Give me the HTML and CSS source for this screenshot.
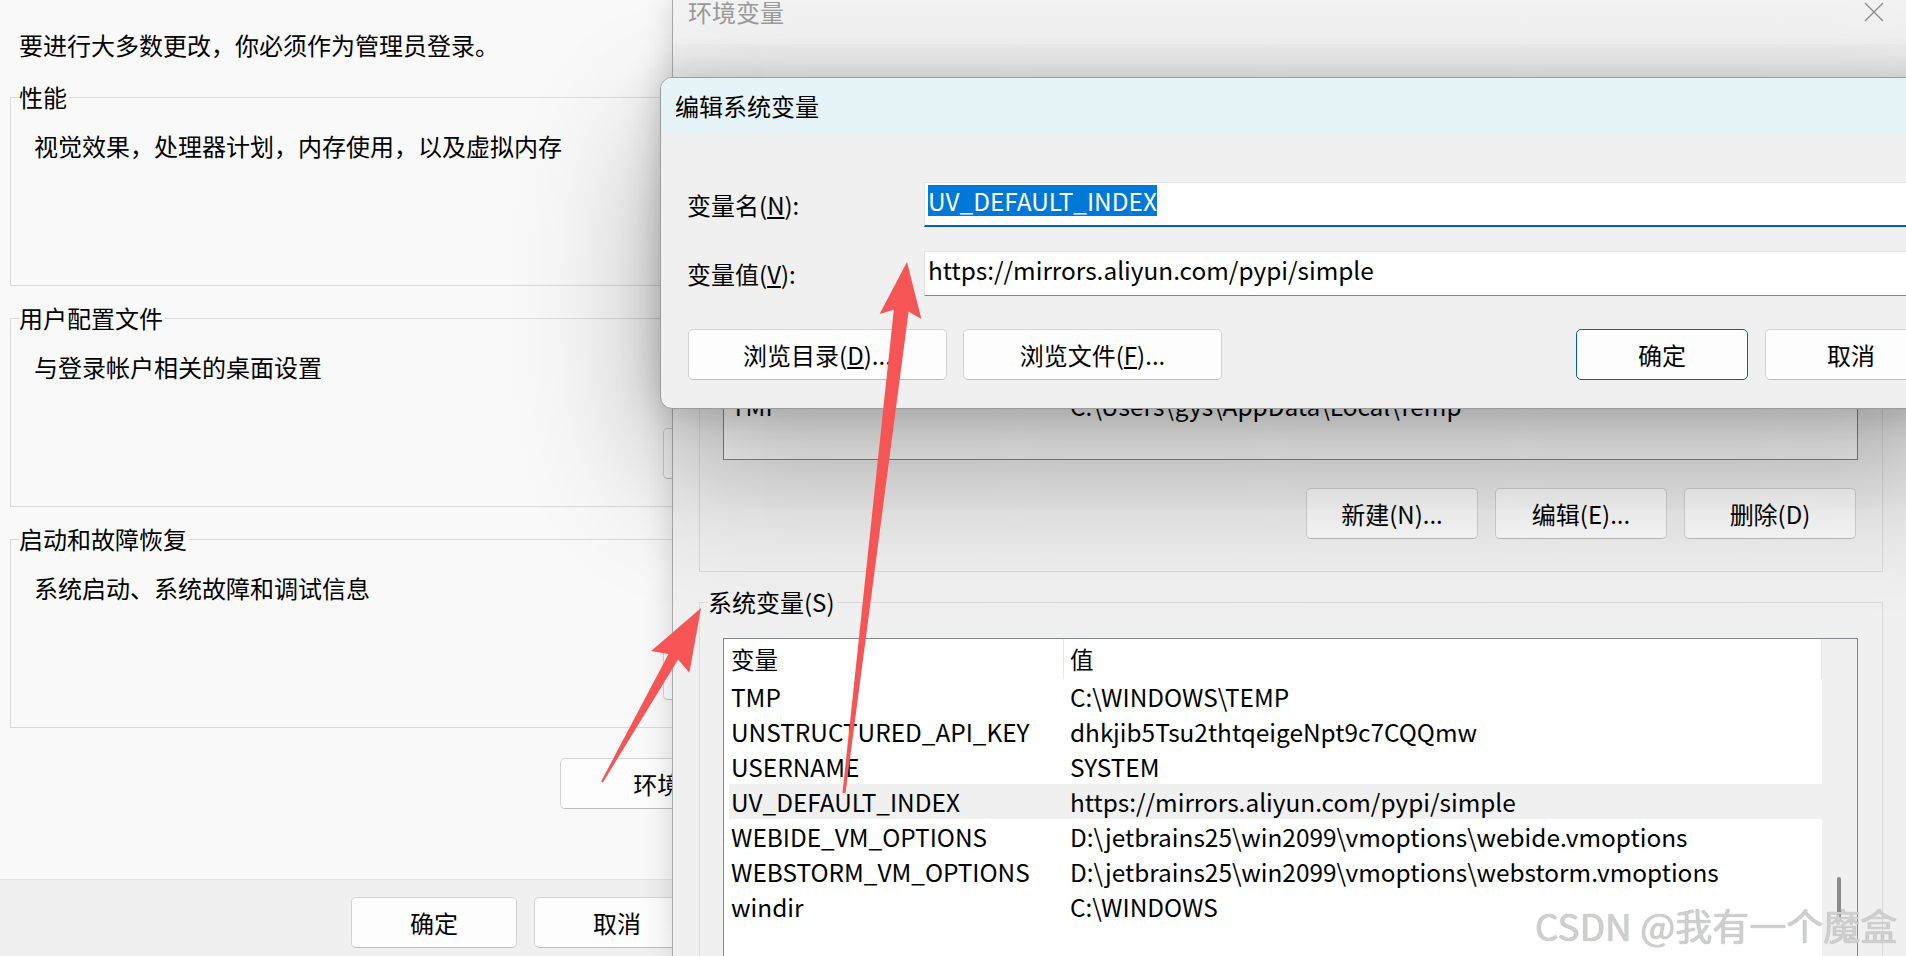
FILE: index.html
```html
<!DOCTYPE html>
<html lang="zh-CN">
<head>
    <meta charset="UTF-8">
    <meta name="viewport" content="width=device-width, initial-scale=1.0">
    <title>环境变量</title>
    <link rel="stylesheet" href="styles.css">
</head>
<body>
<div class="desktop">

    <!-- 系统属性 / 高级 -->
    <div class="window sysprops">
        <div class="sp-body">
            <p class="notice">要进行大多数更改，你必须作为管理员登录。</p>

            <div class="group sp-group">
                <div class="group-title">性能</div>
                <div class="group-desc">视觉效果，处理器计划，内存使用，以及虚拟内存</div>
                <button class="btn btn-settings">设置(S)...</button>
            </div>

            <div class="group sp-group">
                <div class="group-title">用户配置文件</div>
                <div class="group-desc">与登录帐户相关的桌面设置</div>
                <button class="btn btn-settings">设置(E)...</button>
            </div>

            <div class="group sp-group">
                <div class="group-title">启动和故障恢复</div>
                <div class="group-desc">系统启动、系统故障和调试信息</div>
                <button class="btn btn-settings">设置(T)...</button>
            </div>

            <div class="sp-actions">
                <button class="btn btn-env">环境变量(N)...</button>
            </div>
        </div>
        <div class="sp-footer">
            <button class="btn btn-std">确定</button>
            <button class="btn btn-std">取消</button>
        </div>
    </div>

    <!-- 环境变量 -->
    <div class="window envvars">
        <div class="env-title">
            <span>环境变量</span>
            <svg class="close-icon" width="20" height="20" viewBox="0 0 20 20">
                <path d="M1 1 L19 19 M19 1 L1 19" stroke="#8f8f8f" stroke-width="1.4" fill="none"/>
            </svg>
        </div>
        <div class="env-body">
            <div class="group user-group">
                <div class="group-title">gys 的用户变量(U)</div>
                <div class="varlist user-list">
                    <div class="list-main">
                        <div class="list-head"><span>变量</span><span>值</span></div>
                        <div class="list-row"><span>ChocolateyLastPathUpdate</span><span>133870452011938011</span></div>
                        <div class="list-row"><span>OneDrive</span><span>C:\Users\gys\OneDrive</span></div>
                        <div class="list-row"><span>OneDriveConsumer</span><span>C:\Users\gys\OneDrive</span></div>
                        <div class="list-row"><span>Path</span><span>C:\Users\gys\.local\bin;C:\Users\gys\AppData\Local\Microsoft\WindowsApps;</span></div>
                        <div class="list-row"><span>PyCharm</span><span>D:\PyCharm\bin;</span></div>
                        <div class="list-row"><span>TEMP</span><span>C:\Users\gys\AppData\Local\Temp</span></div>
                        <div class="list-row"><span>TMP</span><span>C:\Users\gys\AppData\Local\Temp</span></div>
                    </div>
                </div>
                <div class="btn-row">
                    <button class="btn btn-std">新建(N)...</button>
                    <button class="btn btn-std">编辑(E)...</button>
                    <button class="btn btn-std">删除(D)</button>
                </div>
            </div>

            <div class="group sys-group">
                <div class="group-title">系统变量(S)</div>
                <div class="varlist sys-list">
                    <div class="list-main">
                        <div class="list-head"><span>变量</span><span>值</span></div>
                        <div class="list-row"><span>TMP</span><span>C:\WINDOWS\TEMP</span></div>
                        <div class="list-row"><span>UNSTRUCTURED_API_KEY</span><span>dhkjib5Tsu2thtqeigeNpt9c7CQQmw</span></div>
                        <div class="list-row"><span>USERNAME</span><span>SYSTEM</span></div>
                        <div class="list-row selected"><span>UV_DEFAULT_INDEX</span><span>https://mirrors.aliyun.com/pypi/simple</span></div>
                        <div class="list-row"><span>WEBIDE_VM_OPTIONS</span><span>D:\jetbrains25\win2099\vmoptions\webide.vmoptions</span></div>
                        <div class="list-row"><span>WEBSTORM_VM_OPTIONS</span><span>D:\jetbrains25\win2099\vmoptions\webstorm.vmoptions</span></div>
                        <div class="list-row"><span>windir</span><span>C:\WINDOWS</span></div>
                    </div>
                    <div class="scroll-track">
                        <div class="scroll-thumb"></div>
                    </div>
                </div>
            </div>
        </div>
    </div>

    <!-- 编辑系统变量 -->
    <div class="window editdlg">
        <div class="dlg-title">编辑系统变量</div>
        <div class="dlg-body">
            <div class="field-row">
                <label class="field-label">变量名(<u>N</u>):</label>
                <div class="input focused"><span class="sel">UV_DEFAULT_INDEX</span></div>
            </div>
            <div class="field-row">
                <label class="field-label">变量值(<u>V</u>):</label>
                <div class="input">https://mirrors.aliyun.com/pypi/simple</div>
            </div>
            <div class="dlg-buttons">
                <button class="btn btn-browse">浏览目录(<u>D</u>)...</button>
                <button class="btn btn-browse">浏览文件(<u>F</u>)...</button>
                <div class="dlg-confirm">
                    <button class="btn btn-std btn-default">确定</button>
                    <button class="btn btn-std">取消</button>
                </div>
            </div>
        </div>
    </div>

    <!-- 标注箭头 -->
    <svg class="annotations" width="1906" height="956" viewBox="0 0 1906 956">
        <polygon fill="#f65555" points="601.1,781.5 668.5,653.9 651.2,651.0 701,608 689.4,672.8 678.1,659.4 602.9,782.5"/>
        <polygon fill="#f65555" points="842.5,792.8 893.8,309.7 879.6,314.1 907,262 921.4,319.1 908.6,311.5 845.5,793.2"/>
    </svg>

    <div class="watermark">CSDN @我有一个魔盒</div>
</div>
</body>
</html>
```

FILE: styles.css
```css
* {
    box-sizing: border-box;
}

html, body {
    margin: 0;
    height: 100%;
}

body {
    font-family: "Noto Sans CJK SC", "Noto Sans", sans-serif;
    font-size: 24px;
    color: #000;
    background-color: #f9f9f9;
    overflow: hidden;
}

.desktop {
    position: relative;
    width: 1906px;
    height: 956px;
    overflow: hidden;
}

.window {
    position: absolute;
}

button {
    font: inherit;
    color: inherit;
}

.btn {
    display: flex;
    align-items: center;
    justify-content: center;
    height: 51px;
    padding: 0;
    background-color: #fdfdfd;
    border: 1px solid #d3d3d3;
    border-bottom-color: #bdbdbd;
    border-radius: 5px;
    white-space: nowrap;
}

.btn-std {
    width: 172px;
}

/* group boxes */
.group {
    border: 1px solid #dadada;
}

.group-title {
    width: fit-content;
    margin: -16px 0 0 8px;
    padding-right: 2px;
    line-height: 30px;
    white-space: nowrap;
}

/* system properties */
.sysprops {
    left: 0;
    top: 0;
    width: 700px;
    height: 956px;
    display: flex;
    flex-direction: column;
    background-color: #f9f9f9;
}

.sp-body {
    flex: 1;
    padding-top: 30px;
}

.notice {
    margin: 0 0 0 19px;
    line-height: 30px;
}

.sp-group {
    height: 189px;
    margin: 32px 0 0 10px;
}

.notice + .sp-group {
    margin-top: 37px;
}

.sp-group .group-title {
    background-color: #f9f9f9;
}

.group-desc {
    margin: 19px 0 0 23px;
    line-height: 30px;
}

.btn-settings {
    width: 172px;
    margin: 46px 0 0 652px;
}

.sp-actions {
    margin-top: 30px;
}

.btn-env {
    width: 296px;
    margin-left: 560px;
}

.sp-footer {
    height: 77px;
    display: flex;
    gap: 17px;
    padding: 17px 0 0 351px;
    background-color: #f0f0f0;
    border-top: 1px solid #e3e3e3;
}

/* environment variables */
.envvars {
    left: 672px;
    top: 0;
    width: 1234px;
    height: 956px;
    background-color: #f0f0f0;
    border-left: 1px solid #a9a9a9;
    box-shadow: 0 0 30px rgba(0, 0, 0, 0.16);
}

.env-title {
    height: 44px;
    display: flex;
    justify-content: space-between;
    padding: 0 22px 0 15px;
    line-height: 24px;
    color: #9b9b9b;
    background-color: #f3f3f3;
}

.close-icon {
    margin-top: 2px;
}

.env-body {
    padding: 0 23px 0 26px;
}

.envvars .group-title {
    background-color: #f0f0f0;
}

.user-group {
    height: 467px;
    margin-top: 61px;
}

.sys-group {
    height: 400px;
    margin-top: 30px;
}

.varlist {
    display: flex;
    margin: 21px 24px 0 23px;
    background-color: #fff;
    border: 1px solid #828790;
    overflow: hidden;
}

.user-list {
    height: 323px;
    margin-top: 17px;
}

.user-group .btn-row {
    margin-top: 28px;
}

.sys-list {
    height: 340px;
}

.list-main {
    flex: 1;
    padding-left: 5px;
}

.list-head,
.list-row {
    display: grid;
    grid-template-columns: 334px 1fr;
    white-space: nowrap;
}

.list-head {
    height: 40px;
    line-height: 40px;
    font-size: 23.5px;
    border-right: 1px solid #e5e5e5;
}

.list-head span:first-child {
    padding-left: 2px;
}

.list-head span:last-child {
    padding-left: 6px;
    border-left: 1px solid #e5e5e5;
}

.list-row {
    height: 35px;
    line-height: 35px;
    font-size: 24.4px;
}

.list-row span {
    overflow: hidden;
}

.list-row span:first-child {
    padding-left: 2px;
}

.list-row span:last-child {
    padding-left: 7px;
}

.list-row.selected {
    background-color: #f0f0f0;
}

.scroll-track {
    width: 35px;
    background-color: #f0f0f0;
}

.scroll-thumb {
    width: 4px;
    height: 43px;
    margin: 238px 0 0 15px;
    background-color: #8a8a8a;
    border-radius: 2px;
}

.btn-row {
    display: flex;
    justify-content: flex-end;
    gap: 17px;
    padding-right: 26px;
}

/* edit dialog */
.editdlg {
    left: 660px;
    top: 77px;
    width: 1305px;
    height: 332px;
    background-color: #f0f0f0;
    border: 1px solid #9c9c9c;
    border-radius: 12px;
    overflow: hidden;
    box-shadow: 0 60px 140px rgba(0, 0, 0, 0.32), 0 0 40px rgba(0, 0, 0, 0.18);
}

.dlg-title {
    height: 56px;
    padding-left: 14px;
    line-height: 56px;
    background-color: #e6f4f8;
}

.dlg-body {
    padding: 48px 27px 0 26px;
}

.field-row {
    display: flex;
    align-items: center;
    height: 45px;
}

.field-row + .field-row {
    margin-top: 24px;
}

.field-label {
    width: 237px;
    flex-shrink: 0;
}

.input {
    flex: 1;
    height: 45px;
    padding: 2px 3px 0;
    font-size: 24.4px;
    line-height: 31px;
    white-space: nowrap;
    overflow: hidden;
    background-color: #fff;
    border: 1px solid #e4e4e4;
    border-bottom-color: #868686;
}

.input.focused {
    border-bottom: 2px solid #005fb8;
}

.sel {
    display: inline-block;
    height: 31px;
    color: #fff;
    background-color: #0078d7;
}

.dlg-buttons {
    display: flex;
    gap: 16px;
    margin-top: 33px;
}

.btn-browse {
    width: 259px;
}

.dlg-buttons .btn-browse:first-child {
    margin-left: 1px;
}

.dlg-confirm {
    display: flex;
    gap: 17px;
    margin-left: auto;
}

.btn-default {
    border-color: #005fb8;
}

/* overlays */
.annotations {
    position: absolute;
    left: 0;
    top: 0;
    pointer-events: none;
}

.watermark {
    position: absolute;
    left: 1535px;
    top: 900px;
    font-size: 37px;
    line-height: 50px;
    white-space: nowrap;
    color: #cfcfcf;
    text-shadow: 0 0 1px #a0a0a0;
    pointer-events: none;
}
```
